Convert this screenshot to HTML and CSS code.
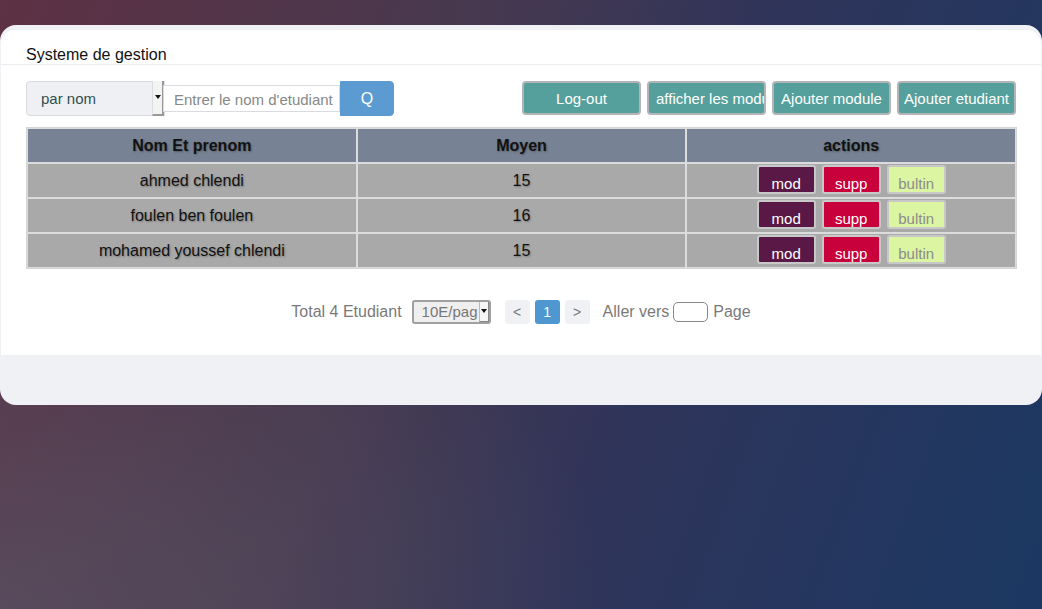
FILE: index.html
```html
<!DOCTYPE html>
<html lang="fr">
<head>
<meta charset="utf-8">
<title>Systeme de gestion</title>
<link rel="stylesheet" href="styles.css">
</head>
<body>
<div class="card">
  <div class="panel">
    <div class="header">Systeme de gestion</div>
    <div class="toolbar">
      <div class="search">
        <div class="select"><span class="select-text">par nom</span><span class="select-arrow"><span class="tri"></span></span></div>
        <div class="input">Entrer le nom d'etudiant</div>
        <button class="qbtn">Q</button>
      </div>
      <div class="actions">
        <button class="tbtn">Log-out</button>
        <button class="tbtn clip">afficher les modules</button>
        <button class="tbtn">Ajouter module</button>
        <button class="tbtn">Ajouter etudiant</button>
      </div>
    </div>
    <table class="grid">
      <thead>
        <tr><th>Nom Et prenom</th><th>Moyen</th><th>actions</th></tr>
      </thead>
      <tbody>
        <tr><td>ahmed chlendi</td><td>15</td><td class="act"><span class="b mod">mod</span><span class="b supp">supp</span><span class="b bul">bultin</span></td></tr>
        <tr><td>foulen ben foulen</td><td>16</td><td class="act"><span class="b mod">mod</span><span class="b supp">supp</span><span class="b bul">bultin</span></td></tr>
        <tr><td>mohamed youssef chlendi</td><td>15</td><td class="act"><span class="b mod">mod</span><span class="b supp">supp</span><span class="b bul">bultin</span></td></tr>
      </tbody>
    </table>
    <div class="pager">
      <span class="total">Total 4 Etudiant</span>
      <div class="psel"><span class="psel-text">10E/pag</span><span class="psel-arrow"><span class="tri"></span></span></div>
      <span class="pbox">&lt;</span>
      <span class="pbox active">1</span>
      <span class="pbox">&gt;</span>
      <span class="goto">Aller vers</span>
      <span class="ginput"></span>
      <span class="page">Page</span>
    </div>
  </div>
</div>
</body>
</html>
```
FILE: styles.css
```css
* { box-sizing: border-box; }
html, body { margin: 0; height: 100%; }
body {
  font-family: "Liberation Sans", Arial, sans-serif;
  background:
    radial-gradient(ellipse 60% 60% at 0% 100%, rgba(90,84,100,0.7) 0%, rgba(90,84,100,0) 100%),
    linear-gradient(110deg, #5e3144 0%, #47394f 38%, #2f345a 62%, #1b3862 100%);
  min-height: 609px;
  padding-top: 25px;
}
.card {
  background: #f0f1f5;
  border-radius: 16px;
  height: 380px;
  padding: 5px 1px 0 1px;
}
.panel {
  background: #fff;
  border-radius: 14px 14px 0 0;
  height: 325px;
}
.header {
  height: 35px;
  padding: 16px 0 0 25px;
  font-size: 16px;
  color: #111;
  border-bottom: 1px solid #eaecf0;
}
.toolbar {
  display: flex;
  justify-content: space-between;
  align-items: center;
  margin: 15px 25px 0 25px;
  height: 36px;
}
.search { display: flex; align-items: center; }
.select {
  width: 139px;
  height: 35px;
  background: #eff0f3;
  border: 1px solid #d9dbe0;
  border-radius: 4px 0 0 4px;
  display: flex;
  align-items: center;
}
.select-text {
  flex: 1;
  padding-left: 14px;
  font-size: 15px;
  color: #2f4f4f;
}
.select-arrow {
  width: 12px;
  height: 35px;
  margin-top: -1px;
  margin-bottom: -1px;
  background: #f3f3f3;
  border-left: 1px solid #ddd;
  border-right: 2px solid #999;
  border-bottom: 2px solid #999;
  display: flex;
  align-items: center;
  justify-content: center;
}
.tri {
  width: 0; height: 0;
  border-left: 3px solid transparent;
  border-right: 3px solid transparent;
  border-top: 4px solid #111;
}
.input {
  width: 177px;
  height: 27px;
  margin-left: -2px;
  border: 1px solid #d9dbe0;
  background: #fff;
  font-size: 15px;
  color: #888;
  padding: 5px 0 0 10px;
  white-space: nowrap;
}
.qbtn {
  width: 54px;
  height: 35px;
  background: #5b9bd1;
  border: 1px solid #5b9bd1;
  border-radius: 0 4px 4px 0;
  color: #fff;
  font-family: inherit;
  font-size: 16px;
  padding: 2px 0 0 0;
}
.actions { display: flex; gap: 6px; }
.tbtn {
  width: 119px;
  height: 34px;
  background: #55a09c;
  border: 2px solid #b2b4b6;
  border-radius: 4px;
  color: #fff;
  font-family: inherit;
  font-size: 15px;
  padding: 0;
  white-space: nowrap;
  overflow: hidden;
}
.tbtn.clip { text-align: left; padding-left: 7px; }
.grid {
  margin: 11px 25px 0 25px;
  width: 991px;
  border-collapse: separate;
  border-spacing: 0;
  border: 1px solid #d4d4d4;
  background: #e0e0e0;
  table-layout: fixed;
}
.grid th, .grid td {
  border: 1px solid #dcdcdc;
  text-align: center;
  font-size: 16px;
  color: #111;
  text-shadow: 1px 1px 2px rgba(0,0,0,0.3);
}
.grid th {
  background: #778394;
  height: 35px;
  font-weight: bold;
}
.grid td {
  background: #a9a9a9;
  height: 35px;
  padding: 0;
}
.grid td.act { vertical-align: top; padding-top: 1px; text-shadow: none; }
.b {
  display: inline-block;
  width: 59px;
  height: 29px;
  margin: 0 3px;
  border: 2px solid #c8c8c8;
  border-radius: 3px;
  font-size: 15px;
  line-height: 33px;
  vertical-align: top;
}
.mod { background: #5a1846; color: #fff; }
.supp { background: #c8003c; color: #fff; }
.bul { background: #dbf5a2; color: #8c8c8c; }
.pager {
  display: flex;
  align-items: center;
  justify-content: center;
  margin-top: 30px;
  height: 25px;
  font-size: 16px;
  color: #7a7a7a;
}
.total { margin-right: 10px; }
.psel {
  width: 79px;
  height: 24px;
  border: 2px solid #a0a0a0;
  border-radius: 3px;
  background: #efefef;
  display: flex;
  align-items: center;
  margin-right: 14px;
}
.psel-text { flex: 1; padding-left: 8px; font-size: 15px; color: #777; }
.psel-arrow {
  width: 10px;
  height: 20px;
  background: #f5f5f5;
  border-left: 1px solid #bbb;
  border-right: 1px solid #888;
  border-bottom: 1px solid #888;
  display: flex;
  align-items: center;
  justify-content: center;
}
.pbox {
  width: 25px;
  height: 24px;
  border-radius: 3px;
  background: #f0f1f4;
  color: #777;
  font-size: 14px;
  display: flex;
  align-items: center;
  justify-content: center;
  margin-right: 5px;
}
.pbox.active { background: #4f97d0; color: #fff; }
.goto { margin-left: 8px; margin-right: 4px; }
.ginput {
  width: 35px;
  height: 20px;
  border: 1px solid #888;
  border-radius: 5px;
  margin-right: 5px;
}
```
